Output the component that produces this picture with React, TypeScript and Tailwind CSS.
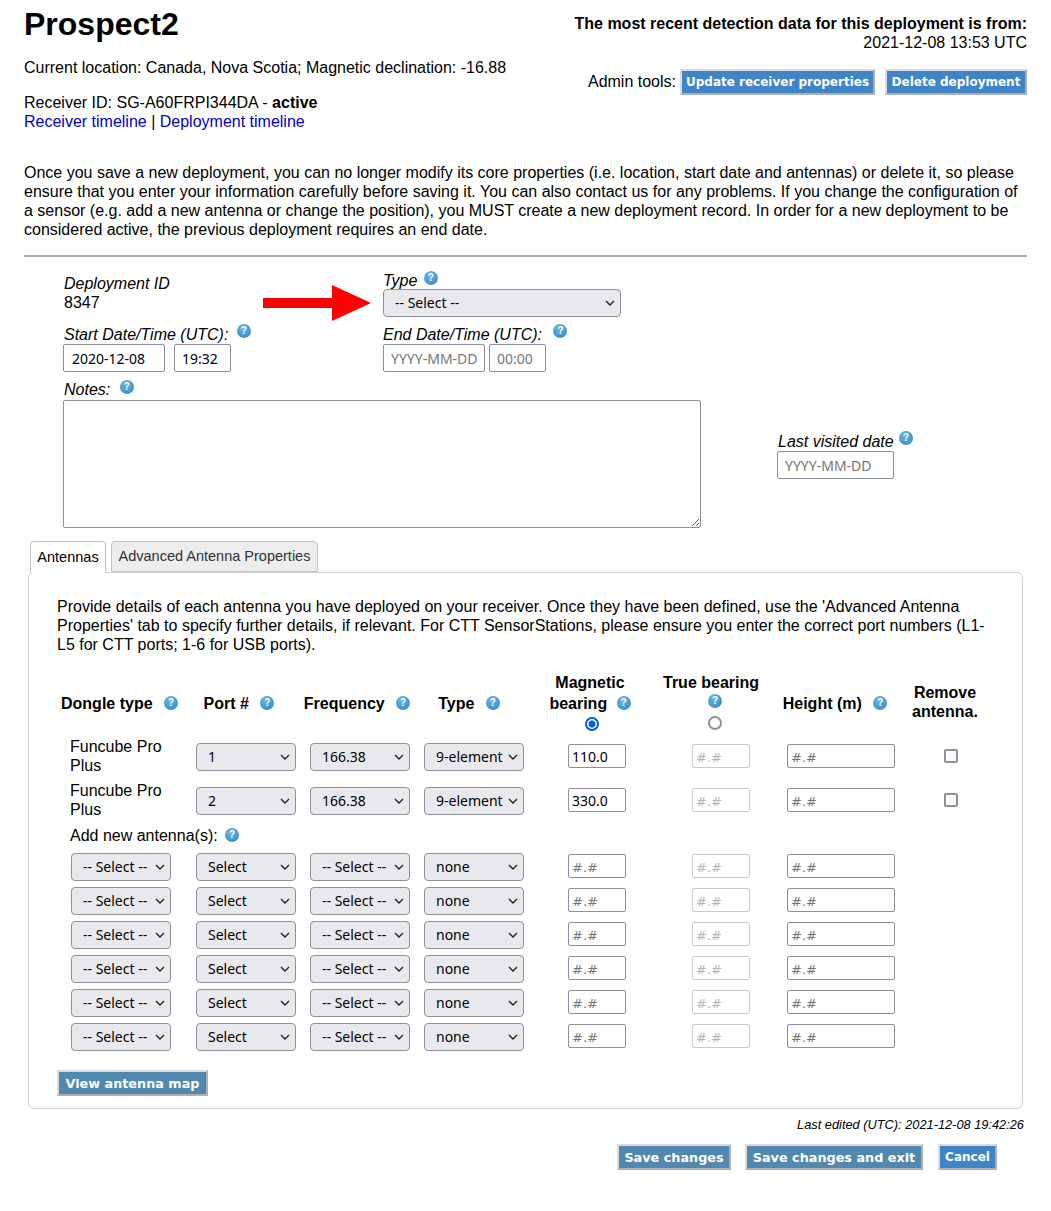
import React from "react";

const ctl = "font-['Noto_Sans',sans-serif] text-[14px] text-black";
const sel = `${ctl} h-7 appearance-none rounded-[4px] border border-[#8f8f9d] bg-[#e9e9ed] pb-[2px] pl-[11px]`;
const inp = `${ctl} h-7 rounded-[2px] border border-[#8f8f9d] bg-white px-1 placeholder:text-[#757575]`;
const btn = "whitespace-nowrap font-['DejaVu_Sans',sans-serif] font-bold text-white h-[26px] border-2 border-[#dcdcdc] border-b-[#b0b0b0] border-r-[#b0b0b0]";

function Help({ className = "" }: { className?: string }) {
  return (
    <span className={`inline-flex h-[14px] w-[14px] items-center justify-center rounded-full bg-[radial-gradient(circle_at_40%_30%,#6bb4e4,#3085c4)] font-['Liberation_Sans',sans-serif] text-[10px] font-bold not-italic leading-none text-white ${className}`}>
      ?
    </span>
  );
}

function Sel({ w, v, className = "" }: { w: string; v: string; className?: string }) {
  return (
    <span className={`relative inline-block ${w} ${className}`}>
      <select defaultValue={v} className={`${sel} block w-full`}>
        <option>{v}</option>
      </select>
      <svg className="pointer-events-none absolute right-[6px] top-[11px]" width="10" height="6" viewBox="0 0 10 6">
        <path d="M1 1l4 4 4-4" fill="none" stroke="#222" strokeWidth="1.4" />
      </svg>
    </span>
  );
}

function Bearing({ v, w = "w-[58px]", off = false }: { v?: string; w?: string; off?: boolean }) {
  return (
    <input
      defaultValue={v}
      placeholder="#.#"
      disabled={off}
      className={`${inp} ${w} h-[24px] pl-[3px] placeholder:font-['DejaVu_Sans'] placeholder:text-[13px] ${off ? "border-[#c9c9ce] placeholder:text-[#b5b5b5]" : ""}`}
    />
  );
}

const cols = "grid grid-cols-[132px_114px_114px_114px_132px_116px_124px_96px] items-center";

function Row({ d, port, freq, type, mag, remove }: { d?: boolean; port: string; freq: string; type: string; mag?: string; remove?: boolean }) {
  return (
    <div className={`${cols} ${d ? "h-[44px]" : "h-[34px]"}`}>
      {d ? (
        <div className="pb-[2px] pl-[13px] leading-[19px]">
          Funcube Pro
          <br />
          Plus
        </div>
      ) : (
        <div className="pl-[14px]">
          <Sel w="w-[100px]" v="-- Select --" />
        </div>
      )}
      <div className="pl-[7px]"><Sel w="w-[100px]" v={port} /></div>
      <div className="pl-[7px]"><Sel w="w-[100px]" v={freq} /></div>
      <div className="pl-[7px]"><Sel w="w-[100px]" v={type} /></div>
      <div className="flex justify-center pb-[2px]"><Bearing v={mag} /></div>
      <div className="flex justify-center pb-[2px]"><Bearing off /></div>
      <div className="flex justify-center pb-[2px]"><Bearing w="w-[108px]" /></div>
      <div className="flex justify-center">
        {remove && <input type="checkbox" className="-mt-[2px] h-[14px] w-[14px] appearance-none rounded-[2px] border-2 border-[#8f8f9d] bg-white" />}
      </div>
    </div>
  );
}

export default function App() {
  return (
    <div className="relative h-[1211px] bg-white px-6 font-['Liberation_Sans',Arial,sans-serif] text-[16px] leading-[19px] text-black">
      <div className="flex justify-between">
        <div>
          <h1 className="pt-[6px] text-[32px] font-bold leading-[37px]">Prospect2</h1>
          <p className="mt-[15px]">Current location: Canada, Nova Scotia; Magnetic declination: -16.88</p>
          <p className="mt-[16px]">Receiver ID: SG-A60FRPI344DA - <b>active</b></p>
          <p>
            <span className="text-[#0000c8]">Receiver timeline</span> | <span className="text-[#0000c8]">Deployment timeline</span>
          </p>
        </div>
        <div className="pt-[14px] text-right">
          <p className="font-bold">The most recent detection data for this deployment is from:</p>
          <p>2021-12-08 13:53 UTC</p>
          <div className="mt-[17px] flex items-center justify-end gap-[10px]">
            <span className="-mt-[2px] mr-[-6px]">Admin tools:</span>
            <button className={`${btn} w-[195px] bg-[#3f84c8] text-[12px]`}>Update receiver properties</button>
            <button className={`${btn} w-[142px] bg-[#3f84c8] text-[12px]`}>Delete deployment</button>
          </div>
        </div>
      </div>

      <p className="mt-[32px]">
        Once you save a new deployment, you can no longer modify its core properties (i.e. location, start date and antennas) or delete it, so please ensure that you enter your information carefully before saving it. You can also contact us for any problems. If you change the configuration of a sensor (e.g. add a new antenna or change the position), you MUST create a new deployment record. In order for a new deployment to be considered active, the previous deployment requires an end date.
      </p>

      <hr className="mt-[16px] border-0 border-t-2 border-[#aaaaaa]" />

      <div className="relative pl-[39px]">
        <svg className="absolute left-[239px] top-[28px]" width="108" height="36" viewBox="0 0 108 36">
          <path d="M0 13h69V0l39 18-39 18V23H0z" fill="#ff0000" />
        </svg>

        <div className="grid grid-cols-[320px_1fr]">
          <div className="pl-[1px] pt-[17px]">
            <div className="italic">Deployment ID</div>
            <div>8347</div>
          </div>
          <div className="pt-[14px]">
            <div className="italic">Type <Help className="relative -top-[5px] ml-[2px]" /></div>
            <Sel w="w-[238px]" v="-- Select --" className="-mt-px block" />
          </div>
          <div className="pt-[8px]">
            <div className="pl-[1px] italic">Start Date/Time (UTC): <Help className="relative -top-[6px] ml-[4px]" /></div>
            <div className="flex gap-[9px]">
              <input defaultValue="2020-12-08" className={`${inp} w-[102px] pl-[8px]`} />
              <input defaultValue="19:32" className={`${inp} w-[57px] pl-[7px]`} />
            </div>
          </div>
          <div className="pt-[8px]">
            <div className="italic">End Date/Time (UTC): <Help className="relative -top-[6px] ml-[7px]" /></div>
            <div className="flex gap-[4px]">
              <input placeholder="YYYY-MM-DD" className={`${inp} w-[102px] pl-[7px]`} />
              <input placeholder="00:00" className={`${inp} w-[57px] pl-[7px]`} />
            </div>
          </div>
        </div>

        <div className="mt-[8px] flex">
          <div>
            <div className="pl-[1px] italic">Notes: <Help className="relative -top-[5px] ml-[5px]" /></div>
            <textarea className="mt-[1px] block h-[128px] w-[638px] rounded-[2px] border border-[#8f8f9d] bg-white" />
          </div>
          <div className="ml-[76px] pt-[52px]">
            <div className="pl-[1px] italic">Last visited date <Help className="relative -top-[6px] ml-[1px]" /></div>
            <input placeholder="YYYY-MM-DD" className={`${inp} w-[117px] pl-[7px]`} />
          </div>
        </div>
      </div>

      <div className="relative mt-[13px] flex gap-[5px] pl-[6px] font-['Liberation_Sans',sans-serif] text-[14.5px]">
        <div className="relative z-10 flex h-[32px] w-[76px] items-center justify-center rounded-t-[4px] border border-b-0 border-[#c5c5c5] bg-white">Antennas</div>
        <div className="flex h-[31px] w-[207px] items-center justify-center rounded-t-[4px] border border-[#c5c5c5] bg-[#ededed] text-[#333]">Advanced Antenna Properties</div>
      </div>

      <div className="mx-[4px] -mt-px h-[537px] w-[995px] rounded-[6px] border border-[#cfcfcf] px-7 pt-[24px]">
        <p>
          Provide details of each antenna you have deployed on your receiver. Once they have been defined, use the 'Advanced Antenna Properties' tab to specify further details, if relevant. For CTT SensorStations, please ensure you enter the correct port numbers (L1-L5 for CTT ports; 1-6 for USB ports).
        </p>

        <div className={`${cols} mt-[18px] h-[63px] whitespace-nowrap text-center font-bold`}>
          <div className="pl-[4px] text-left">Dongle type <Help className="relative -top-[3px] ml-[7px]" /></div>
          <div className="pr-[14px]">Port # <Help className="relative -top-[3px] ml-[7px]" /></div>
          <div className="relative -left-[3px]">Frequency <Help className="relative -top-[3px] ml-[7px]" /></div>
          <div className="pr-[10px]">Type <Help className="relative -top-[3px] ml-[7px]" /></div>
          <div className="flex flex-col items-center self-start pr-[14px] leading-[21px]">
            <div>Magnetic<br />bearing <Help className="relative -top-[3px] ml-[5px]" /></div>
            <input type="radio" defaultChecked name="b" className="relative left-[2px] mt-[3px] h-[14px] w-[14px] appearance-none rounded-full border-2 border-[#0060df] bg-[radial-gradient(circle,#0060df_3px,#ffffff_4px)]" />
          </div>
          <div className="flex flex-col items-center self-start pr-[20px] leading-[21px]">
            <div>True bearing</div>
            <Help className="relative left-[4px] mt-[1px]" />
            <input type="radio" name="b" className="relative left-[4px] mt-[8px] h-[14px] w-[14px] appearance-none rounded-full border-2 border-[#8f8f9d] bg-white" />
          </div>
          <div className="pr-[12px]">Height (m) <Help className="relative -top-[3px] ml-[7px]" /></div>
          <div className="pb-[4px] pr-[12px]">Remove<br />antenna.</div>
        </div>

        <Row d port="1" freq="166.38" type="9-element" mag="110.0" remove />
        <Row d port="2" freq="166.38" type="9-element" mag="330.0" remove />
        <div className="pl-[13px] pt-[3px]">Add new antenna(s): <Help className="relative -top-[3px] ml-[3px]" /></div>
        <div className="mt-[5px]">
          {[0, 1, 2, 3, 4, 5].map((i) => (
            <Row key={i} port="Select" freq="-- Select --" type="none" />
          ))}
        </div>
        <button className={`${btn} mt-[16px] w-[151px] bg-[#5088b0] text-[12.8px]`}>View antenna map</button>
      </div>

      <p className="mt-[8px] pr-[3px] text-right text-[12.8px] italic leading-[16px]">Last edited (UTC): 2021-12-08 19:42:26</p>

      <div className="mt-[11px] flex justify-end pr-[30px]">
        <button className={`${btn} w-[114px] bg-[#5088b0] text-[12.8px]`}>Save changes</button>
        <button className={`${btn} ml-[14px] w-[178px] bg-[#5088b0] text-[12.8px]`}>Save changes and exit</button>
        <button className={`${btn} ml-[15px] w-[59px] bg-[#3f84c8] text-[12px]`}>Cancel</button>
      </div>
    </div>
  );
}
